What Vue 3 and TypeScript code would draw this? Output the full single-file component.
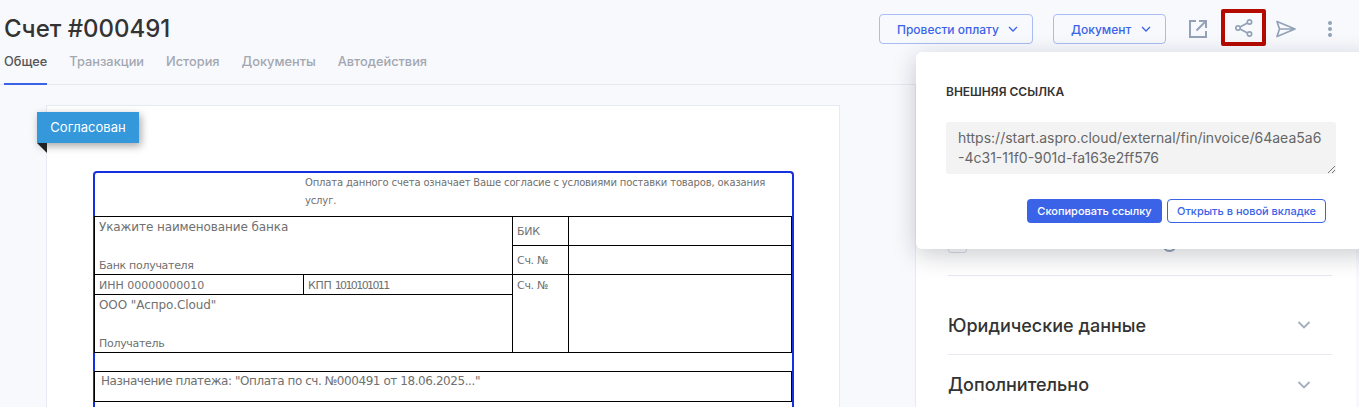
<script setup lang="ts">
const tabs: string[] = ['Общее', 'Транзакции', 'История', 'Документы', 'Автодействия']
</script>

<template>
  <div class="page">
    <header class="head">
      <div class="head-left">
        <h1 class="title">Счет #000491</h1>
        <nav class="tabs">
          <span v-for="(t, i) in tabs" :key="t" class="tab" :class="{ active: i === 0 }">{{ t }}</span>
        </nav>
      </div>
      <div class="actions">
        <button class="btn-out first">Провести оплату
          <svg class="chev" width="10" height="6" viewBox="0 0 10 6"><path d="M1 1l4 4 4-4" fill="none" stroke="currentColor" stroke-width="1.3" /></svg>
        </button>
        <button class="btn-out second">Документ
          <svg class="chev" width="10" height="6" viewBox="0 0 10 6"><path d="M1 1l4 4 4-4" fill="none" stroke="currentColor" stroke-width="1.3" /></svg>
        </button>
        <span class="ico ext">
          <svg width="18" height="18" viewBox="0 0 18 18" fill="none" stroke="#93a2b7" stroke-width="2"><path d="M7 1H1v16h16v-6M10 1h7v7M16.500 1.500L7.500 10.500" /></svg>
        </span>
        <span class="ico share">
          <svg width="18" height="18" viewBox="0 0 18 18" fill="none" stroke="#93a2b7" stroke-width="1.700"><circle cx="3" cy="9" r="2.200" /><circle cx="14.500" cy="3" r="2.200" /><circle cx="14.500" cy="15" r="2.200" /><path d="M5 8l7.500-4M5 10l7.500 4" /></svg>
        </span>
        <span class="ico send">
          <svg width="20" height="18" viewBox="0 0 20 18" fill="none" stroke="#93a2b7" stroke-width="1.700" stroke-linejoin="round"><path d="M1 1.500L19 9 1 16.500 3.500 9zM3.500 9H19" /></svg>
        </span>
        <span class="ico dots">
          <svg width="6" height="18" viewBox="0 0 6 18" fill="#93a2b7"><circle cx="3" cy="3" r="2" /><circle cx="3" cy="9" r="2" /><circle cx="3" cy="15" r="2" /></svg>
        </span>
      </div>
    </header>

    <div class="body">
      <main class="main">
        <section class="paper">
          <div class="ribbon">Согласован</div>
          <div class="invoice">
            <p class="notice">Оплата данного счета означает Ваше согласие с условиями поставки товаров, оказания услуг.</p>
            <div class="bank">
              <div class="cell bank-name">
                <span class="big">Укажите наименование банка</span>
                <span class="cap">Банк получателя</span>
              </div>
              <div class="cell c-label r1">БИК</div>
              <div class="cell c-val r1"></div>
              <div class="cell c-label r2">Сч. №</div>
              <div class="cell c-val r2"></div>
              <div class="cell inn">ИНН 00000000010</div>
              <div class="cell kpp">КПП <span class="narrow">1010101011</span></div>
              <div class="cell c-label r3">Сч. №</div>
              <div class="cell c-val r3"></div>
              <div class="cell receiver">
                <span class="big">ООО "Аспро.Cloud"</span>
                <span class="cap">Получатель</span>
              </div>
            </div>
            <div class="purpose">Назначение платежа: "Оплата по сч. №000491 от 18.06.2025..."</div>
          </div>
        </section>
      </main>

      <aside class="side">
        <div class="peek">
          <span class="check"></span>
          <span class="round"></span>
        </div>
        <div class="acc first-acc">
          <span>Юридические данные</span>
          <svg width="14" height="8" viewBox="0 0 14 8"><path d="M1.500 1l5.500 5.500L12.500 1" fill="none" stroke="#a5adbb" stroke-width="1.800" /></svg>
        </div>
        <div class="acc">
          <span>Дополнительно</span>
          <svg width="14" height="8" viewBox="0 0 14 8"><path d="M1.500 1l5.500 5.500L12.500 1" fill="none" stroke="#a5adbb" stroke-width="1.800" /></svg>
        </div>
      </aside>
    </div>

    <div class="pop">
      <div class="pop-title">ВНЕШНЯЯ ССЫЛКА</div>
      <div class="link">https://start.aspro.cloud/external/fin/invoice/64aea5a6<br />-4c31-11f0-901d-fa163e2ff576
        <svg class="grip" width="9" height="9" viewBox="0 0 9 9"><path d="M1 8l7-7M5 8l3-3" stroke="#555" stroke-width="0.800" /></svg>
      </div>
      <div class="pop-btns">
        <button class="b-fill">Скопировать ссылку</button>
        <button class="b-line">Открыть в новой вкладке</button>
      </div>
    </div>
  </div>
</template>

<style>
html, body { margin: 0; }
</style>

<style scoped>
.page {
  width: 1359px;
  height: 407px;
  overflow: hidden;
  position: relative;
  background: #f8f9fd;
  font-family: Inter, "Liberation Sans", sans-serif;
  color: #333;
}
.head {
  height: 84px;
  border-bottom: 1px solid #e6e8f2;
  display: flex;
  justify-content: space-between;
}
.head-left { padding: 13px 0 0 4px; }
.title {
  margin: 0;
  font-size: 24px;
  line-height: 32px;
  font-weight: 500;
  color: #333;
}
.tabs { display: flex; gap: 22px; margin-top: 1px; }
.tab {
  font-size: 12.800px;
  line-height: 16px;
  padding: 8px 0 14px;
  color: #a3a7b0;
  font-weight: 500;
  margin-bottom: -1px;
}
.tab.active { color: #555; border-bottom: 2px solid #3a63e8; padding-bottom: 13px; }
.actions { display: flex; align-items: flex-start; padding-top: 14px; }
.btn-out {
  height: 30px;
  box-sizing: border-box;
  border: 1px solid #a9bcf5;
  border-radius: 4px;
  background: transparent;
  color: #3a63e8;
  font: 500 12px Inter, sans-serif;
  padding: 0 14px 0 17px;
  display: flex;
  align-items: center;
  justify-content: space-between;
  white-space: nowrap;
}
.first { width: 154px; margin-right: 20px; }
.second { width: 113px; margin-right: 23px; }
.ico { display: flex; align-items: center; justify-content: center; height: 30px; }
.ext { width: 18px; }
.share {
  width: 37px;
  height: 29px;
  margin: -5px 0 0 14px;
  border: 4px solid #b40a00;
  border-radius: 2px;
}
.send { width: 20px; margin-left: 10px; }
.dots { width: 6px; margin: 0 26px 0 31px; }

.body { display: flex; height: 322px; }
.main { width: 915px; padding: 20px 0 0 46px; box-sizing: border-box; }
.paper {
  width: 794px;
  height: 400px;
  box-sizing: border-box;
  background: #fff;
  border: 1px solid #e8eaf3;
  position: relative;
}
.ribbon {
  position: absolute;
  left: -10px;
  top: 6px;
  width: 102px;
  height: 31px;
  background: #3498db;
  color: #fff;
  font-size: 13px;
  line-height: 31px;
  text-align: center;
  box-shadow: 2px 3px 8px rgba(0, 0, 0, 0.35);
}
.ribbon::after {
  content: "";
  position: absolute;
  left: 0;
  top: 31px;
  width: 10px;
  height: 10px;
  background: #222;
  clip-path: polygon(0 0, 100% 0, 100% 100%);
}
.invoice {
  position: absolute;
  left: 46px;
  top: 65px;
  width: 701px;
  height: 300px;
  box-sizing: border-box;
  border: 2px solid #1530e0;
  border-bottom: 0;
  border-radius: 4px 4px 0 0;
  font-family: "DejaVu Sans", sans-serif;
  color: #707070;
  letter-spacing: -0.3px;
}
.notice {
  margin: 0;
  padding: 1px 20px 0 210px;
  height: 43px;
  box-sizing: border-box;
  font-size: 10px;
  line-height: 18px;
  letter-spacing: -0.15px;
}
.bank {
  display: grid;
  margin-left: -1px;
  grid-template-columns: 209px 209px 56px 1fr;
  grid-template-rows: 28px 29px 20px 58px;
  border: solid #000;
  border-width: 1px 1px 1px 0;
  font-size: 11px;
}
.cell { border-left: 1px solid #000; border-top: 1px solid #000; padding: 1px 4px 0; line-height: 19px; box-sizing: border-box; }
.bank-name, .receiver { display: flex; flex-direction: column; justify-content: space-between; }
.bank-name { grid-column: 1 / 3; grid-row: 1 / 3; border-top: 0; }
.big { font-size: 12px; letter-spacing: -0.1px; }
.cap { line-height: 17px; }
.r1 { grid-row: 1; border-top: 0; }
.r2 { grid-row: 2; }
.r3 { grid-row: 3 / 5; }
.r1.c-label, .r2.c-label { line-height: 28px; }
.c-val { grid-column: 4; }
.c-label { grid-column: 3; }
.inn { grid-column: 1; grid-row: 3; letter-spacing: 0; }
.kpp { grid-column: 2; grid-row: 3; }
.narrow { letter-spacing: -1.600px; }
.receiver { grid-column: 1 / 3; grid-row: 4; }
.purpose {
  margin: 18px 0 0 -1px;
  height: 31px;
  border: 1px solid #000;
  font-size: 12px;
  line-height: 18px;
  padding-left: 6px;
  box-sizing: border-box;
  letter-spacing: -0.43px;
}

.side {
  width: 441px;
  height: 400px;
  background: #fff;
  border-left: 1px solid #e8eaf3;
  padding: 0 24px 0 32px;
  box-sizing: border-box;
}
.peek {
  height: 190px;
  border-bottom: 1px solid #e6e8f2;
  position: relative;
}
.check {
  position: absolute;
  left: 0;
  top: 150px;
  width: 19px;
  height: 18px;
  border: 1px solid #d8dbe6;
  border-radius: 3px;
  box-sizing: border-box;
}
.round {
  position: absolute;
  left: 214px;
  top: 152px;
  width: 15px;
  height: 15px;
  border: 2px solid #93a2b7;
  border-radius: 50%;
  box-sizing: border-box;
}
.acc {
  height: 60px;
  display: flex;
  align-items: center;
  justify-content: space-between;
  padding-right: 21px;
  font-size: 18px;
  font-weight: 500;
  color: #333;
  border-bottom: 1px solid #e6e8f2;
  box-sizing: border-box;
}
.first-acc { height: 79px; padding-top: 20px; }

.pop {
  position: absolute;
  left: 916px;
  top: 52px;
  width: 460px;
  height: 197px;
  background: #fff;
  border-radius: 6px;
  box-shadow: 0 6px 24px rgba(20, 22, 40, 0.22);
  padding: 32px 0 0 30px;
  box-sizing: border-box;
}
.pop-title { font-size: 12px; line-height: 15px; font-weight: 600; color: #333; }
.link {
  margin-top: 23px;
  width: 390px;
  height: 52px;
  box-sizing: border-box;
  background: #f3f3f4;
  border-radius: 3px;
  padding: 6px 12px 0;
  font-size: 14px;
  line-height: 20px;
  color: #666;
  position: relative;
  white-space: nowrap;
}
.grip { position: absolute; right: 0; bottom: 0; }
.pop-btns { display: flex; gap: 5px; margin-top: 25px; margin-left: 81px; }
.b-fill, .b-line {
  height: 24px;
  border-radius: 4px;
  font: 500 11px Inter, sans-serif;
  box-sizing: border-box;
  padding: 0;
}
.b-fill { width: 135px; background: #3a63e8; color: #fff; border: 0; }
.b-line { width: 159px; background: #fff; color: #3a63e8; border: 1px solid #3a63e8; }
</style>
